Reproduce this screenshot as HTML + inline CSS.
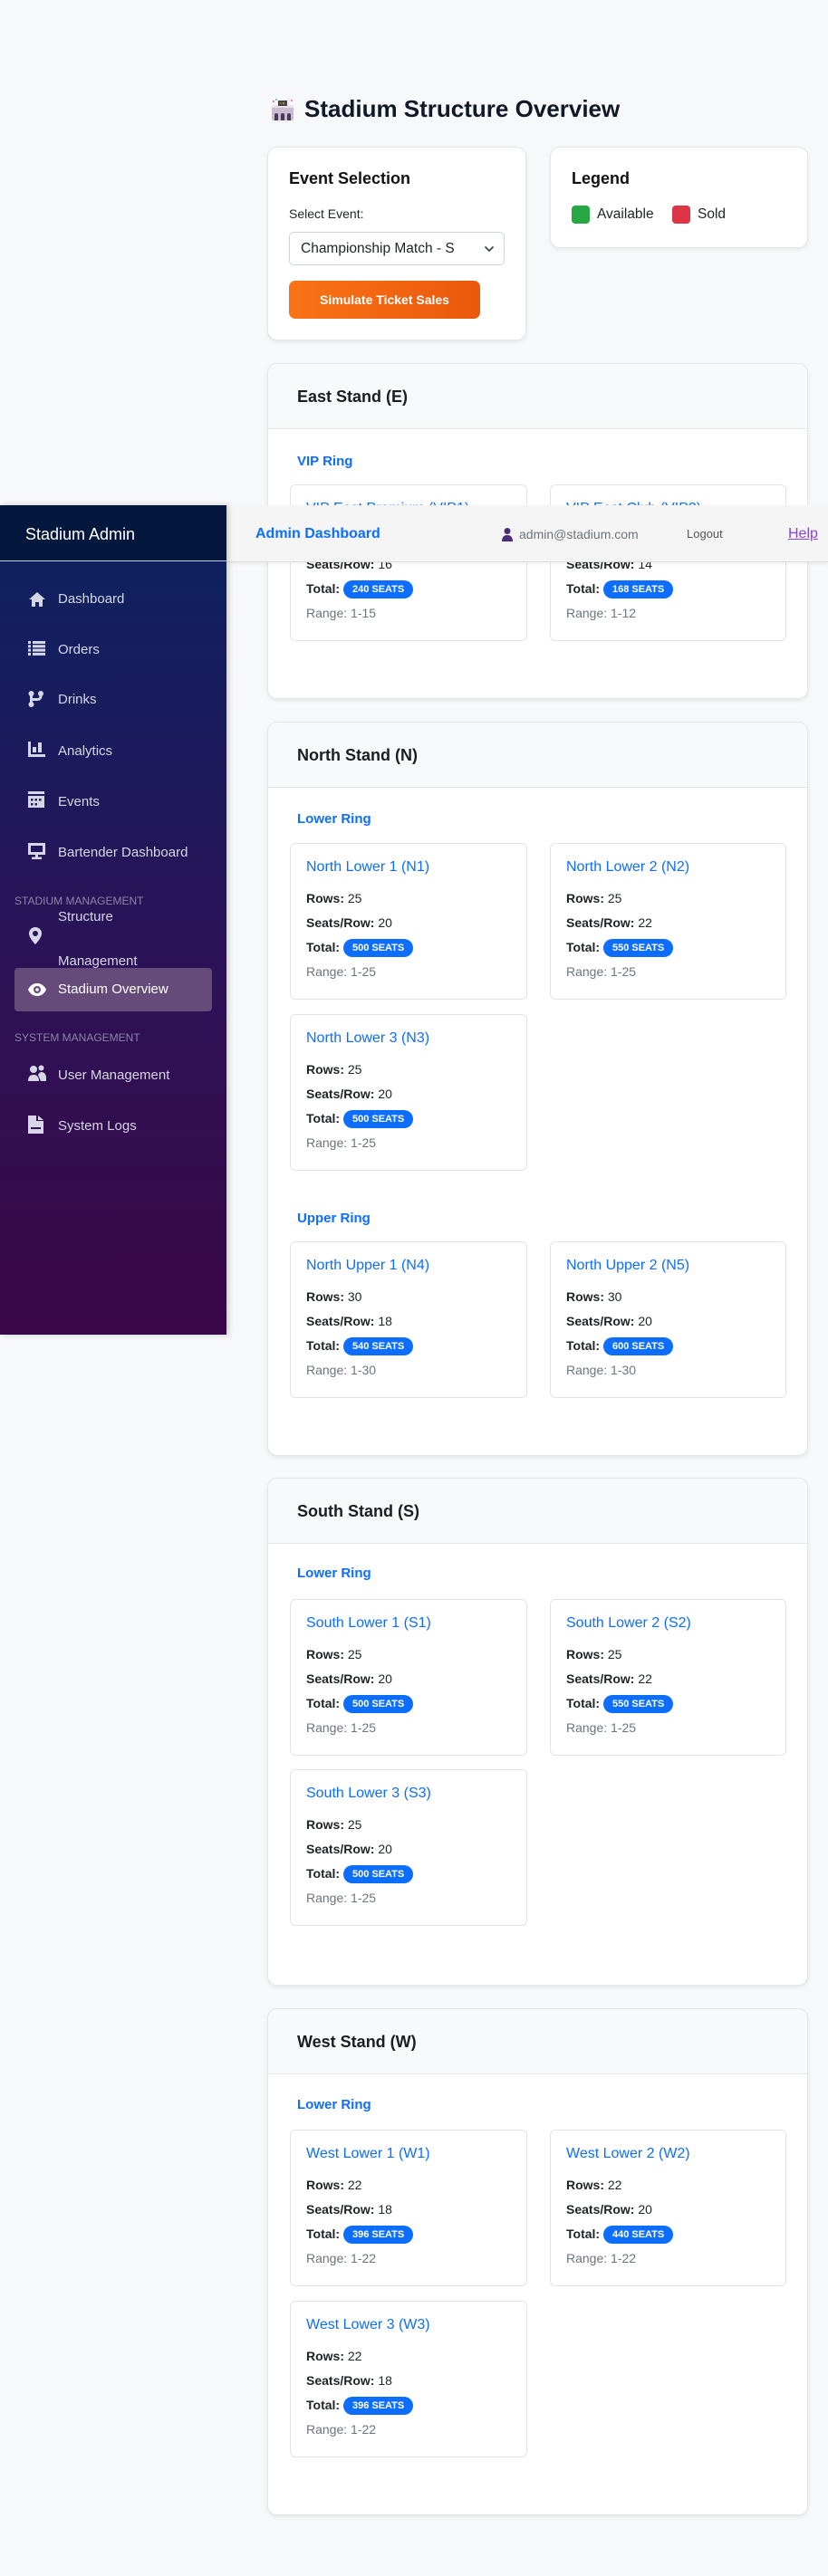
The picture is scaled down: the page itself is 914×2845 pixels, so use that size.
<!DOCTYPE html>
<html><head><meta charset="utf-8">
<style>
*{box-sizing:border-box;margin:0;padding:0}
body{width:914px;height:2845px;background:#f7f8fa;font-family:"Liberation Sans",sans-serif;position:relative;overflow:hidden;color:#1f2937}
.a{position:absolute}
.card{position:absolute;background:#fff;border:1px solid #e3e6ea;border-radius:11px;box-shadow:0 2px 5px rgba(0,0,0,.07)}
.stand{position:absolute;left:295px;width:597px;background:#fff;border:1px solid #e3e6ea;border-radius:11px;box-shadow:0 2px 5px rgba(0,0,0,.08);overflow:hidden}
.sh{height:72px;background:#f8f9fa;border-bottom:1px solid #e3e6ea;padding-left:32px;line-height:72px;font-size:18px;font-weight:600;color:#1a1d21}
.ring{position:absolute;left:32px;font-size:15px;font-weight:700;color:#0d6efd;line-height:20px}
.sub{position:absolute;width:262px;height:173px;border:1px solid #e1e4e8;border-radius:6px;background:#fff}
.sub .l{position:absolute;left:17px;line-height:20px;font-size:14px;color:#212529}
.sub .t{font-size:16px;color:#0d6efd;font-weight:500}
.sub b{font-weight:700}
.badge{display:inline-block;background:#0d6efd;color:#fff;font-size:11px;font-weight:700;border-radius:10px;padding:0 10px;line-height:20px;height:20px;vertical-align:middle}
.rg{color:#6c757d !important}
.nav{position:absolute;left:64px;font-size:15px;color:#d5d7e6;line-height:20px}
.ic{position:absolute;left:31px}
.sec{position:absolute;left:16px;font-size:12px;color:#8a86a3;line-height:16px}
</style></head><body>

<svg class="a" style="left:299px;top:108px" width="26" height="26" viewBox="0 0 26 26">
<rect x="1" y="9" width="24" height="16" rx="2" fill="#c9bcd0"/>
<rect x="1" y="8" width="24" height="3" fill="#e8e0ee"/>
<rect x="8" y="3" width="10" height="6" fill="#444"/>
<rect x="10" y="5" width="2" height="2" fill="#e33"/><rect x="13" y="5" width="2" height="2" fill="#3c3"/>
<path d="M4 25v-6a2 2 0 0 1 4 0v6zM11 25v-6a2 2 0 0 1 4 0v6zM18 25v-6a2 2 0 0 1 4 0v6z" fill="#4a3a5a"/>
<circle cx="3" cy="4" r="1" fill="#e55"/><circle cx="23" cy="3" r="1" fill="#e5c"/><circle cx="6" cy="2" r="1" fill="#5ae"/>
</svg>
<div class="a" style="left:336px;top:104px;font-size:26px;font-weight:700;color:#111827;line-height:32px">Stadium Structure Overview</div>

<div class="card" style="left:295px;top:162px;width:286px;height:214px"></div>
<div class="a" style="left:319px;top:187px;font-size:18px;font-weight:600;line-height:20px;color:#111">Event Selection</div>
<div class="a" style="left:319px;top:227px;font-size:14px;line-height:18px;color:#212529">Select Event:</div>
<div class="a" style="left:319px;top:256px;width:238px;height:37px;border:1px solid #ced4da;border-radius:5px;background:#fff;overflow:hidden">
<div class="a" style="left:12px;top:0;width:190px;overflow:hidden;white-space:nowrap;line-height:35px;font-size:15.5px;color:#212529">Championship Match - S</div>
<svg class="a" style="left:214px;top:14px" width="12" height="8" viewBox="0 0 12 8"><path d="M1.5 1.5l4.5 4.5 4.5-4.5" fill="none" stroke="#343a40" stroke-width="1.6"/></svg>
</div>
<div class="a" style="left:319px;top:310px;width:211px;height:42px;border-radius:7px;background:linear-gradient(90deg,#f97316,#ea580c);color:#fff;font-size:14px;font-weight:700;text-align:center;line-height:42px">Simulate Ticket Sales</div>

<div class="card" style="left:607px;top:162px;width:285px;height:112px"></div>
<div class="a" style="left:631px;top:187px;font-size:18px;font-weight:600;line-height:20px;color:#111">Legend</div>
<div class="a" style="left:631px;top:227px;width:20px;height:20px;border-radius:4px;background:#28a745"></div>
<div class="a" style="left:659px;top:227px;font-size:15.5px;line-height:20px;color:#212529">Available</div>
<div class="a" style="left:742px;top:227px;width:20px;height:20px;border-radius:4px;background:#dc3545"></div>
<div class="a" style="left:770px;top:227px;font-size:15.5px;line-height:20px;color:#212529">Sold</div>

<div class="stand" style="top:401px;height:371px">
<div class="sh">East Stand (E)</div>
<div class="ring" style="top:98px">VIP Ring</div>
<div class="sub" style="left:24px;top:133px"><div class="l t" style="top:16px">VIP East Premium (VIP1)</div><div class="l" style="top:50px"><b>Rows:</b> 15</div><div class="l" style="top:77px"><b>Seats/Row:</b> 16</div><div class="l" style="top:104px"><b>Total:</b> <span class="badge">240 SEATS</span></div><div class="l rg" style="top:131px">Range: 1-15</div></div>
<div class="sub" style="left:311px;top:133px;width:261px"><div class="l t" style="top:16px">VIP East Club (VIP2)</div><div class="l" style="top:50px"><b>Rows:</b> 12</div><div class="l" style="top:77px"><b>Seats/Row:</b> 14</div><div class="l" style="top:104px"><b>Total:</b> <span class="badge">168 SEATS</span></div><div class="l rg" style="top:131px">Range: 1-12</div></div>
</div>

<div class="stand" style="top:797px;height:811px">
<div class="sh">North Stand (N)</div>
<div class="ring" style="top:97px">Lower Ring</div>
<div class="sub" style="left:24px;top:133px"><div class="l t" style="top:16px">North Lower 1 (N1)</div><div class="l" style="top:50px"><b>Rows:</b> 25</div><div class="l" style="top:77px"><b>Seats/Row:</b> 20</div><div class="l" style="top:104px"><b>Total:</b> <span class="badge">500 SEATS</span></div><div class="l rg" style="top:131px">Range: 1-25</div></div>
<div class="sub" style="left:311px;top:133px;width:261px"><div class="l t" style="top:16px">North Lower 2 (N2)</div><div class="l" style="top:50px"><b>Rows:</b> 25</div><div class="l" style="top:77px"><b>Seats/Row:</b> 22</div><div class="l" style="top:104px"><b>Total:</b> <span class="badge">550 SEATS</span></div><div class="l rg" style="top:131px">Range: 1-25</div></div>
<div class="sub" style="left:24px;top:322px"><div class="l t" style="top:16px">North Lower 3 (N3)</div><div class="l" style="top:50px"><b>Rows:</b> 25</div><div class="l" style="top:77px"><b>Seats/Row:</b> 20</div><div class="l" style="top:104px"><b>Total:</b> <span class="badge">500 SEATS</span></div><div class="l rg" style="top:131px">Range: 1-25</div></div>
<div class="ring" style="top:538px">Upper Ring</div>
<div class="sub" style="left:24px;top:573px"><div class="l t" style="top:16px">North Upper 1 (N4)</div><div class="l" style="top:50px"><b>Rows:</b> 30</div><div class="l" style="top:77px"><b>Seats/Row:</b> 18</div><div class="l" style="top:104px"><b>Total:</b> <span class="badge">540 SEATS</span></div><div class="l rg" style="top:131px">Range: 1-30</div></div>
<div class="sub" style="left:311px;top:573px;width:261px"><div class="l t" style="top:16px">North Upper 2 (N5)</div><div class="l" style="top:50px"><b>Rows:</b> 30</div><div class="l" style="top:77px"><b>Seats/Row:</b> 20</div><div class="l" style="top:104px"><b>Total:</b> <span class="badge">600 SEATS</span></div><div class="l rg" style="top:131px">Range: 1-30</div></div>
</div>

<div class="stand" style="top:1632px;height:561px">
<div class="sh">South Stand (S)</div>
<div class="ring" style="top:95px">Lower Ring</div>
<div class="sub" style="left:24px;top:133px"><div class="l t" style="top:16px">South Lower 1 (S1)</div><div class="l" style="top:50px"><b>Rows:</b> 25</div><div class="l" style="top:77px"><b>Seats/Row:</b> 20</div><div class="l" style="top:104px"><b>Total:</b> <span class="badge">500 SEATS</span></div><div class="l rg" style="top:131px">Range: 1-25</div></div>
<div class="sub" style="left:311px;top:133px;width:261px"><div class="l t" style="top:16px">South Lower 2 (S2)</div><div class="l" style="top:50px"><b>Rows:</b> 25</div><div class="l" style="top:77px"><b>Seats/Row:</b> 22</div><div class="l" style="top:104px"><b>Total:</b> <span class="badge">550 SEATS</span></div><div class="l rg" style="top:131px">Range: 1-25</div></div>
<div class="sub" style="left:24px;top:321px"><div class="l t" style="top:16px">South Lower 3 (S3)</div><div class="l" style="top:50px"><b>Rows:</b> 25</div><div class="l" style="top:77px"><b>Seats/Row:</b> 20</div><div class="l" style="top:104px"><b>Total:</b> <span class="badge">500 SEATS</span></div><div class="l rg" style="top:131px">Range: 1-25</div></div>
</div>

<div class="stand" style="top:2218px;height:560px">
<div class="sh">West Stand (W)</div>
<div class="ring" style="top:96px">Lower Ring</div>
<div class="sub" style="left:24px;top:133px"><div class="l t" style="top:16px">West Lower 1 (W1)</div><div class="l" style="top:50px"><b>Rows:</b> 22</div><div class="l" style="top:77px"><b>Seats/Row:</b> 18</div><div class="l" style="top:104px"><b>Total:</b> <span class="badge">396 SEATS</span></div><div class="l rg" style="top:131px">Range: 1-22</div></div>
<div class="sub" style="left:311px;top:133px;width:261px"><div class="l t" style="top:16px">West Lower 2 (W2)</div><div class="l" style="top:50px"><b>Rows:</b> 22</div><div class="l" style="top:77px"><b>Seats/Row:</b> 20</div><div class="l" style="top:104px"><b>Total:</b> <span class="badge">440 SEATS</span></div><div class="l rg" style="top:131px">Range: 1-22</div></div>
<div class="sub" style="left:24px;top:322px"><div class="l t" style="top:16px">West Lower 3 (W3)</div><div class="l" style="top:50px"><b>Rows:</b> 22</div><div class="l" style="top:77px"><b>Seats/Row:</b> 18</div><div class="l" style="top:104px"><b>Total:</b> <span class="badge">396 SEATS</span></div><div class="l rg" style="top:131px">Range: 1-22</div></div>
</div>

<div class="a" style="left:250px;top:558px;width:664px;height:63px;background:#f5f5f5;border-bottom:1px solid #dcdcdc;box-shadow:0 2px 4px rgba(0,0,0,.05)"></div>
<div class="a" style="left:282px;top:580px;font-size:16px;font-weight:600;color:#0d6efd;line-height:20px">Admin Dashboard</div>
<svg class="a" style="left:554px;top:582px" width="12" height="16" viewBox="0 0 12 16"><circle cx="6" cy="4.5" r="3.5" fill="#4a2c7a"/><path d="M0 16c0-5 2.5-7 6-7s6 2 6 7z" fill="#4a2c7a"/></svg>
<div class="a" style="left:573px;top:581px;font-size:14px;color:#6c757d;line-height:18px">admin@stadium.com</div>
<div class="a" style="left:758px;top:581px;font-size:13px;color:#555;line-height:18px">Logout</div>
<div class="a" style="left:870px;top:580px;font-size:16px;color:#8b3fe0;line-height:20px;text-decoration:underline">Help</div>

<div class="a" style="left:0;top:558px;width:250px;height:916px;background:linear-gradient(180deg,#0b2360 0%,#1c1a5c 30%,#2e1155 60%,#3a0848 100%);box-shadow:2px 0 6px rgba(0,0,0,.2)"></div>
<div class="a" style="left:0;top:558px;width:250px;height:62px;background:#04173d;border-bottom:1px solid #c8cce0"></div>
<div class="a" style="left:28px;top:579px;font-size:18px;color:#fff;line-height:22px">Stadium Admin</div>

<svg class="ic" style="top:653px" width="20" height="18" viewBox="0 0 20 18"><path d="M10 1L1 9h3v8h4v-5h4v5h4V9h3z" fill="#d5d7e6"/></svg>
<div class="nav" style="top:652px">Dashboard</div>
<svg class="ic" style="top:708px" width="20" height="16" viewBox="0 0 20 16"><g fill="#d5d7e6"><rect x="0" y="0" width="3" height="3"/><rect x="5" y="0" width="14" height="3"/><rect x="0" y="4.3" width="3" height="3"/><rect x="5" y="4.3" width="14" height="3"/><rect x="0" y="8.6" width="3" height="3"/><rect x="5" y="8.6" width="14" height="3"/><rect x="0" y="12.9" width="3" height="3"/><rect x="5" y="12.9" width="14" height="3"/></g></svg>
<div class="nav" style="top:708px">Orders</div>
<svg class="ic" style="top:763px" width="18" height="18" viewBox="0 0 18 18"><g fill="#d5d7e6"><circle cx="3.5" cy="3" r="3"/><circle cx="3.5" cy="15" r="3"/><circle cx="14" cy="3" r="3"/><rect x="2" y="3" width="3" height="12"/><path d="M12.5 3h3v3a5 5 0 0 1-5 5H5v-3h5.5a2 2 0 0 0 2-2z"/></g></svg>
<div class="nav" style="top:763px">Drinks</div>
<svg class="ic" style="top:819px" width="19" height="17" viewBox="0 0 19 17"><g fill="#d5d7e6"><rect x="0" y="0" width="3" height="17"/><rect x="0" y="14" width="19" height="3"/><rect x="5" y="6" width="4" height="6"/><rect x="11" y="1" width="4" height="11"/></g></svg>
<div class="nav" style="top:820px">Analytics</div>
<svg class="ic" style="top:874px" width="18" height="18" viewBox="0 0 18 18"><g fill="#d5d7e6"><rect x="0" y="0" width="18" height="3"/><path d="M0 5h18v13H0z"/></g><g fill="#2a1d5e"><rect x="3" y="8" width="2.5" height="2.5"/><rect x="7.5" y="8" width="2.5" height="2.5"/><rect x="12" y="8" width="2.5" height="2.5"/><rect x="3" y="13" width="2.5" height="2.5"/><rect x="7.5" y="13" width="2.5" height="2.5"/></g></svg>
<div class="nav" style="top:876px">Events</div>
<svg class="ic" style="top:931px" width="19" height="18" viewBox="0 0 19 18"><g fill="#d5d7e6"><path d="M0 0h19v13H0zM3 3v7h13V3z" fill-rule="evenodd"/><rect x="8" y="13" width="3" height="3"/><rect x="4" y="15.5" width="11" height="2.5"/></g></svg>
<div class="nav" style="top:932px">Bartender Dashboard</div>
<div class="sec" style="top:987px">STADIUM MANAGEMENT</div>
<div class="nav" style="top:1003px">Structure</div>
<svg class="ic" style="top:1024px;left:32px" width="14" height="19" viewBox="0 0 14 19"><path d="M7 0a7 7 0 0 0-7 7c0 5 7 12 7 12s7-7 7-12a7 7 0 0 0-7-7zm0 4a3 3 0 1 1 0 6 3 3 0 0 1 0-6z" fill="#d5d7e6" fill-rule="evenodd"/></svg>
<div class="nav" style="top:1052px">Management</div>
<div class="a" style="left:16px;top:1069px;width:218px;height:48px;border-radius:4px;background:#664b7a"></div>
<svg class="ic" style="top:1086px" width="20" height="14" viewBox="0 0 20 14"><path d="M10 0C5 0 1.5 3.5 0 7c1.5 3.5 5 7 10 7s8.5-3.5 10-7C18.5 3.5 15 0 10 0zm0 3a4 4 0 1 1 0 8 4 4 0 0 1 0-8z" fill="#fff" fill-rule="evenodd"/><circle cx="10" cy="7" r="1.8" fill="#fff"/></svg>
<div class="nav" style="top:1083px;color:#fff">Stadium Overview</div>
<div class="sec" style="top:1138px">SYSTEM MANAGEMENT</div>
<svg class="ic" style="top:1176px" width="20" height="18" viewBox="0 0 20 18"><g fill="#d5d7e6"><circle cx="6" cy="5" r="4"/><path d="M0 18c0-5 2.5-7 6-7s6 2 6 7z"/><circle cx="14.5" cy="3.5" r="3"/><path d="M11 11c1-2 2.2-3 3.5-3 3 0 5.5 2 5.5 7v3h-6z"/></g></svg>
<div class="nav" style="top:1178px">User Management</div>
<svg class="ic" style="top:1232px" width="17" height="20" viewBox="0 0 17 20"><path d="M0 0h9v6h8v14H0zM3 13v2h11v-2zM11 0l6 5h-6z" fill="#d5d7e6" fill-rule="evenodd"/></svg>
<div class="nav" style="top:1234px">System Logs</div>
</body></html>
